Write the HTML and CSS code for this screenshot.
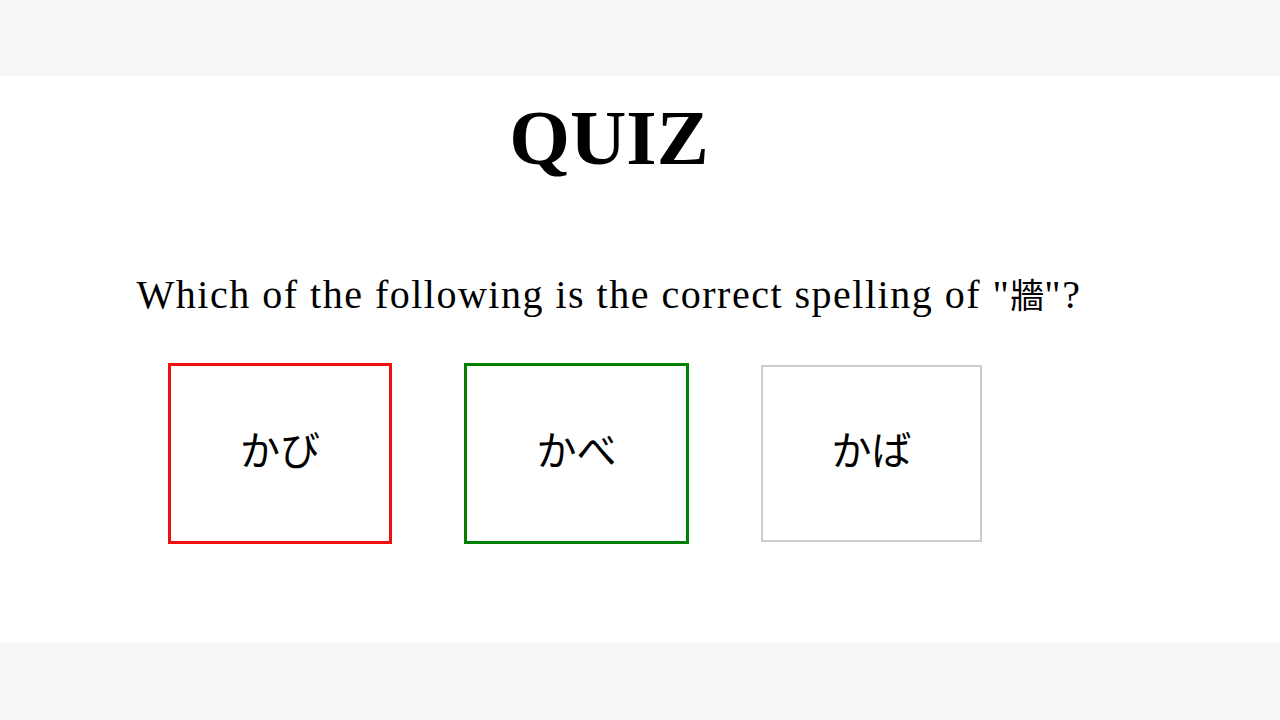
FILE: index.html
```html
<!DOCTYPE html>
<html lang="en">
<head>
<meta charset="utf-8">
<title>Quiz</title>
<link rel="stylesheet" href="styles.css">
</head>
<body>
<div class="band"></div>
<main class="panel">
  <h1 class="title">QUIZ</h1>
  <p class="question">Which of the following is the correct spelling of "<span class="cjk">牆</span>"?</p>
  <div class="options">
    <div class="option wrong">かび</div>
    <div class="option correct">かべ</div>
    <div class="option plain">かば</div>
  </div>
</main>
<div class="band"></div>
</body>
</html>
```

FILE: styles.css
```css
html, body {
  margin: 0;
  padding: 0;
}
body {
  background: #f5f6f8;
  width: 1280px;
  height: 720px;
  overflow: hidden;
  font-family: "Liberation Serif", "Noto Sans CJK JP", serif;
  color: #000;
}
.band {
  height: 76px;
}
.panel {
  background: #fff;
  height: 567px;
  box-sizing: border-box;
  padding: 24px 62px 0 0;
}
.title {
  margin: 0;
  font-size: 78px;
  line-height: 76px;
  font-weight: bold;
  text-align: center;
}
.question {
  margin: 94px 0 0 0;
  font-size: 40px;
  line-height: 48px;
  letter-spacing: 1.5px;
  text-align: center;
}
.cjk {
  font-family: "Noto Sans CJK JP", sans-serif;
  font-size: 34px;
  letter-spacing: 0;
}
.options {
  display: flex;
  align-items: center;
  gap: 72px;
  padding-left: 168px;
  margin-top: 44px;
}
.option {
  display: flex;
  align-items: center;
  justify-content: center;
  font-family: "Noto Sans CJK JP", sans-serif;
  font-size: 40px;
  box-sizing: border-box;
  padding-bottom: 12px;
  background: #fff;
}
.wrong {
  width: 224px;
  height: 181px;
  border: 3px solid #f01010;
}
.correct {
  width: 225px;
  height: 181px;
  border: 3px solid #007f00;
}
.plain {
  width: 221px;
  height: 177px;
  border: 2px solid #cccccc;
}
```
